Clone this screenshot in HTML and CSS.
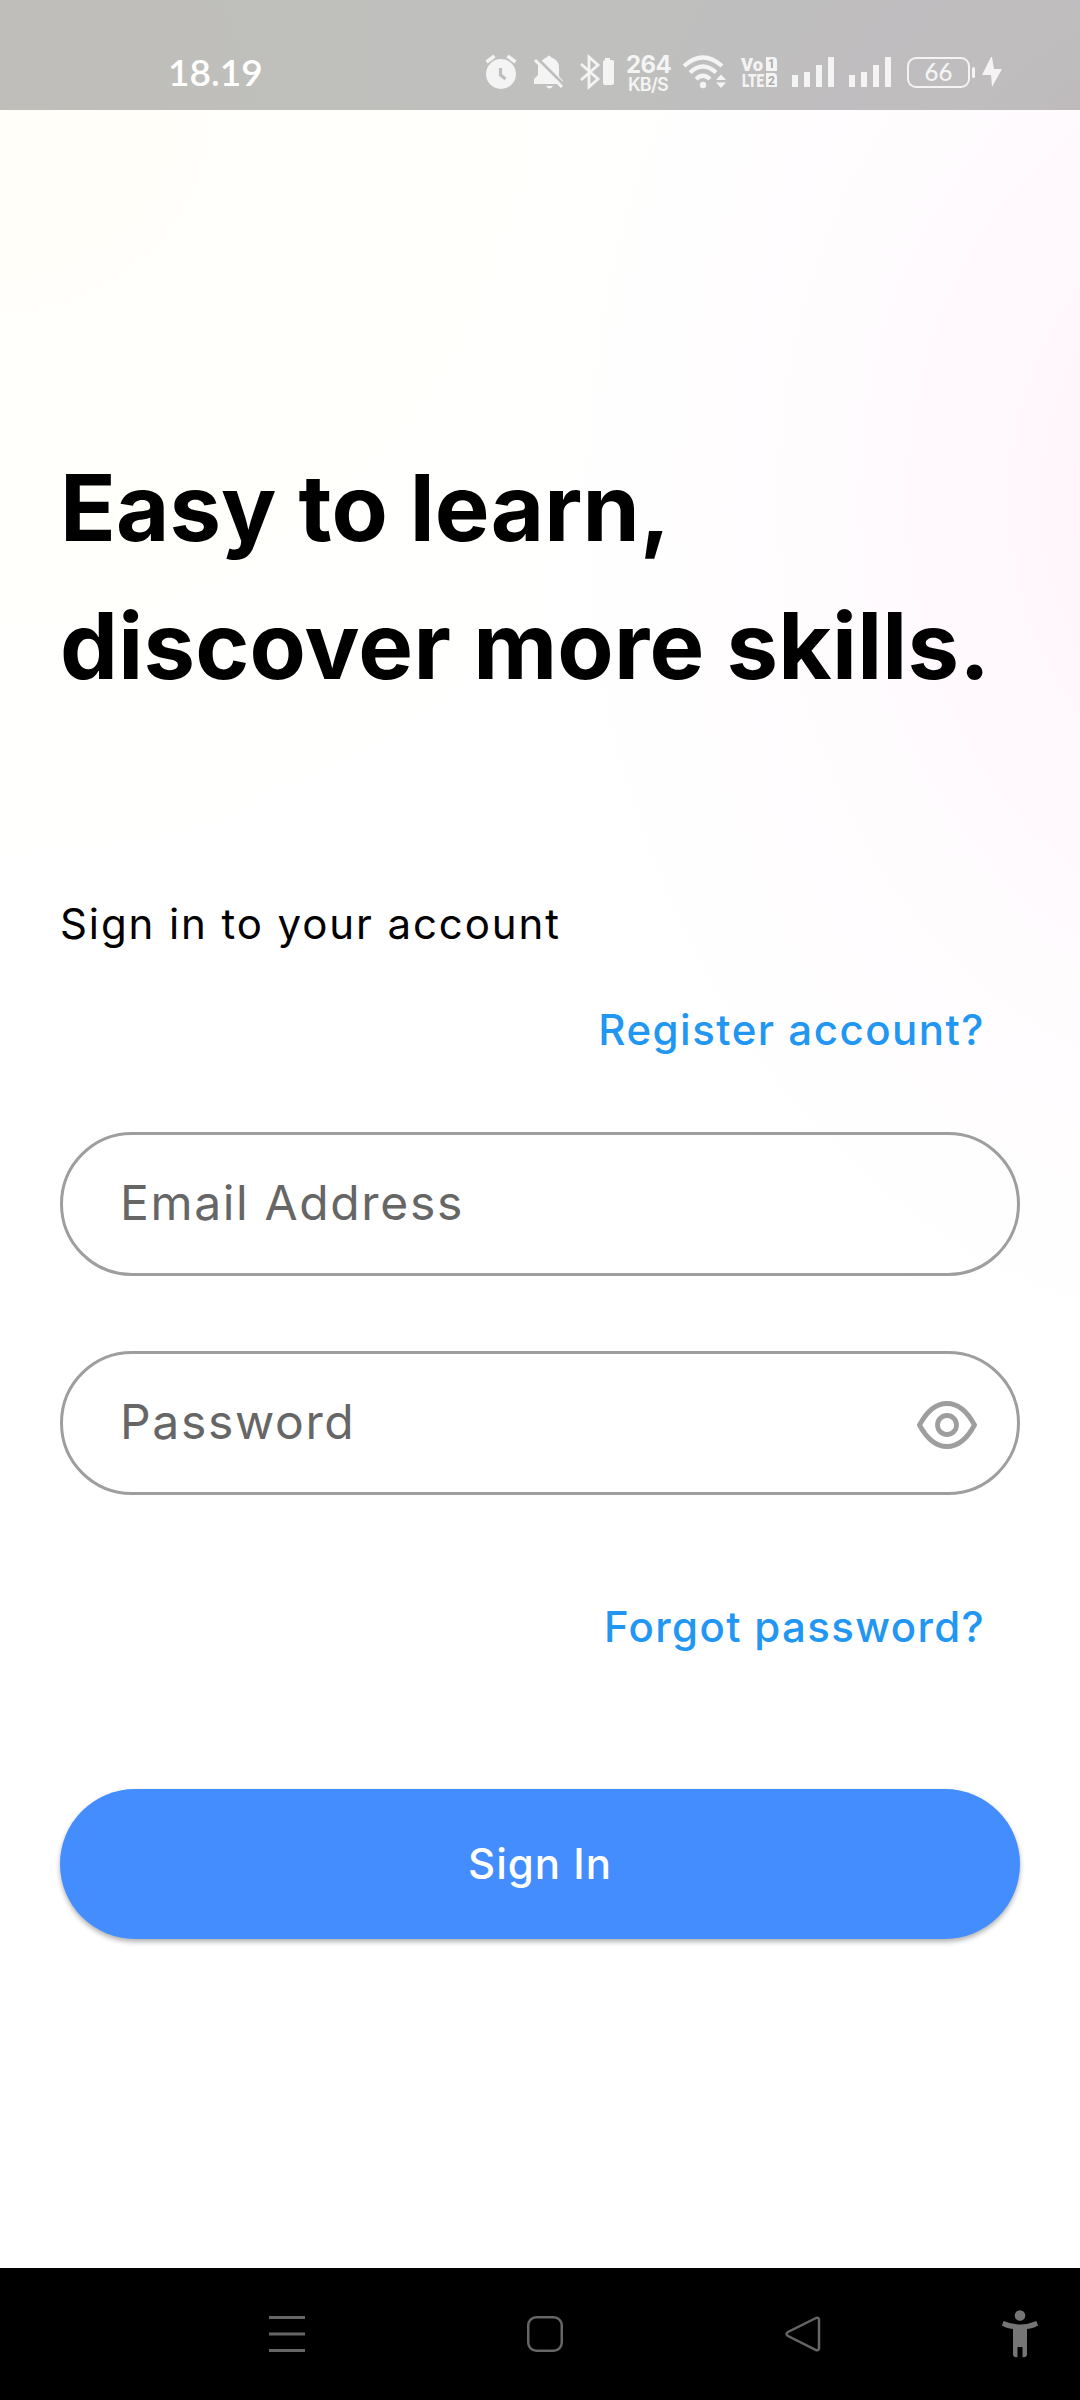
FILE: index.html
```html
<!DOCTYPE html>
<html lang="en">
<head>
<meta charset="utf-8">
<title>Sign In</title>
<link rel="stylesheet" href="styles.css">
</head>
<body>
<div class="screen">
  <header class="status">
    <span class="clock">18.19</span>
    <div class="tray">
      <svg class="alarm" width="32" height="36" viewBox="0 0 32 36"><circle cx="16" cy="20" r="15" fill="#f4f4f4"/><path d="M1.500 8 9.500 2M30.500 8 22.500 2" stroke="#f4f4f4" stroke-width="3.500"/><path d="M15.500 14v7l5 4" fill="none" stroke="#bebebd" stroke-width="3.200"/></svg>
      <svg class="bell" width="32" height="36" viewBox="0 0 32 36"><path d="M9 6.500Q12 3.500 14 3.200q2-3.200 4 0Q26 6 26 13v9l4 5v3H1v-5l4-4v-8Q5 9 9 6.500ZM13 32h7q-3.500 5-7 0Z" fill="#f4f4f4"/><path d="M4 4 32 32" stroke="#bebebd" stroke-width="3"/><path d="M2 6 29 33" stroke="#f4f4f4" stroke-width="3"/></svg>
      <svg class="bt" width="36" height="36" viewBox="0 0 36 36"><path d="m2 10 17 15-9 8V3l9 8L2 26" fill="none" stroke="#f4f4f4" stroke-width="2.800"/><path d="M26 4h5v2h2q2 0 2 2v21q0 2-2 2h-7q-2 0-2-2V8q0-2 2-2Z" fill="#f4f4f4"/></svg>
      <div class="speed"><b>264</b><span>KB/S</span></div>
      <svg class="wifi" width="46" height="36" viewBox="0 0 46 36"><g fill="none" stroke="#f4f4f4" stroke-width="4.200"><path d="M2 12q19-17 38 0M8 18.500q13-12 26 0M14 25q7-6.500 14 0"/></g><circle cx="21" cy="31" r="3.200" fill="#f4f4f4"/><path d="m34 26 5-5.500 5 5.500ZM34 28.500h10L39 34Z" fill="#f4f4f4"/></svg>
      <svg class="volte" width="38" height="32" viewBox="0 0 38 32"><g class="volte-text"><text x="0" y="14.500" textLength="22" lengthAdjust="spacingAndGlyphs">Vo</text><text x="1" y="30.500" textLength="22" lengthAdjust="spacingAndGlyphs">LTE</text></g><path d="M25 1h7q4 0 4 4v10H25zM25 17h7q4 0 4 4v10H25z" fill="#f4f4f4"/><text x="27" y="12.300" class="sim">1</text><text x="27" y="28.500" class="sim">2</text></svg>
      <svg class="bars" width="44" height="30" viewBox="0 0 44 30"><path d="M1 18h6v12H1zM13 15h6v15h-6zM25 8h6v22h-6zM37 0h6v30h-6z" fill="#f4f4f4"/></svg>
      <svg class="bars" width="44" height="30" viewBox="0 0 44 30"><path d="M1 18h6v12H1zM13 15h6v15h-6zM25 8h6v22h-6zM37 0h6v30h-6z" fill="#f4f4f4"/></svg>
      <span class="battery">66</span>
      <svg class="bolt" width="20" height="30" viewBox="0 0 20 30"><path d="M9 0 0 18h9l1 12 10-18h-8L10 0Z" fill="#f4f4f4"/></svg>
    </div>
  </header>
  <main class="login">
    <h1><span class="line-a">Easy to learn,</span><br><span class="line-b">discover more skills.</span></h1>
    <p class="subtitle">Sign in to your account</p>
    <a class="link register">Register account?</a>
    <div class="field"><span class="placeholder">Email Address</span></div>
    <div class="field field-pass"><span class="placeholder">Password</span>
      <svg class="eye" width="62" height="50" viewBox="0 0 62 50"><path d="M3.500 25C11 11 19.500 3.500 31 3.500S51 11 58.500 25C51 39 42.500 46.500 31 46.500S11 39 3.500 25Z" fill="none" stroke="#9e9e9e" stroke-width="4.800"/><circle cx="31" cy="25" r="9.500" fill="none" stroke="#9e9e9e" stroke-width="4.800"/></svg>
    </div>
    <a class="link forgot">Forgot password?</a>
    <button class="submit">Sign In</button>
  </main>
  <nav class="navbar">
    <svg width="36" height="36" viewBox="0 0 36 36"><path d="M0 1.500h36M0 18h36M0 34.500h36" stroke="#666" stroke-width="3"/></svg>
    <svg width="36" height="36" viewBox="0 0 36 36"><rect x="1.250" y="1.250" width="33.500" height="33.500" rx="8" fill="none" stroke="#666" stroke-width="2.500"/></svg>
    <svg width="36" height="36" viewBox="0 0 36 36"><path d="M31 2 3 16q-3 2 0 4l28 14q3 1 3-2V4q0-3-3-2Z" fill="none" stroke="#666" stroke-width="2.500"/></svg>
    <svg class="person" width="38" height="48" viewBox="0 0 38 48"><circle cx="19" cy="5.500" r="5.300" fill="#757575"/><path d="M2.500 11Q19 18 35.500 11l1.500 4.500Q33 18 26 19v26q-1 3-4.500 2V37h-5v10q-3.500 1-4.500-2V19Q5 18 1 15.500Z" fill="#757575"/></svg>
  </nav>
</div>
</body>
</html>
```
FILE: styles.css
```css
* { box-sizing: border-box; }
body { margin: 0; font-family: Inter, "Noto Sans", sans-serif; }
.screen {
  width: 1080px; height: 2400px; display: flex; flex-direction: column;
  background:
    radial-gradient(ellipse 720px 900px at 1250px 500px, #fff1f9 0%, #fff6fb 28%, rgba(255,251,254,.7) 60%, rgba(255,255,255,0) 100%),
    radial-gradient(ellipse 800px 800px at 0 100px, #fffef9 0%, #fffffc 55%, #fff 100%);
}
.status { height: 110px; display: flex; background: rgba(0,0,0,.25); color: #fff; }
.clock { width: 315px; margin-left: 168px; padding-top: 51px; font: 600 37px/41px Lato, sans-serif; }
.tray { display: flex; align-items: flex-start; flex: 1; color: #f4f4f4; }
.tray svg { flex: none; overflow: visible; }
.alarm { margin: 54px 0 0 2px; }
.bell { margin: 54px 0 0 16px; }
.bt { margin: 54px 0 0 14px; }
.speed { width: 46px; margin: 55px 0 0 11px; display: flex; flex-direction: column; font-size: 24px; line-height: 20px; letter-spacing: -.6px; white-space: nowrap; }
.speed span { padding-left: 2px; font-size: 18px; font-weight: 600; line-height: 19px; letter-spacing: -.8px; }
.wifi { margin: 54px 0 0 10px; }
.volte { margin: 56px 0 0 13px; }
.volte-text { font: 900 19px Roboto, sans-serif; fill: #f4f4f4; }
.sim { font: 700 12px Roboto, sans-serif; fill: #a8a8a8; }
.bars { margin: 57px 0 0 12px; }
.bars + .bars { margin-left: 13px; }
.battery { width: 63px; height: 31px; margin: 57px 0 0 15px; position: relative; border: 2.500px solid #f4f4f4; border-radius: 9px; font: 500 24px/26px Lato, sans-serif; text-align: center; flex: none; }
.battery::after { content: ""; position: absolute; right: -7px; top: 8px; width: 3px; height: 11px; border-radius: 2px; background: #f4f4f4; }
.bolt { margin: 57px 0 0 12px; }
.login { flex: 1; display: flex; flex-direction: column; padding: 329px 60px 0; }
h1 { margin: 0; font-size: 92px; line-height: 138px; font-weight: 700; color: #000; white-space: nowrap; }
.line-a { letter-spacing: .1px; }
.line-b { letter-spacing: .25px; }
.subtitle { margin: 179px 0 0; font-size: 42px; line-height: 60px; letter-spacing: 1.900px; color: #000; }
.link { margin-right: 35px; align-self: flex-end; font-size: 42px; line-height: 60px; font-weight: 500; letter-spacing: 1.350px; color: #2196f3; white-space: nowrap; }
.register { margin-top: 46px; letter-spacing: 1.500px; }
.field { height: 144px; margin-top: 72px; padding: 0 39px 0 57px; display: flex; align-items: center; justify-content: space-between; border: 3px solid #9e9e9e; border-radius: 72px; font-size: 48px; letter-spacing: 1.650px; color: #666; }
.field-pass { margin-top: 75px; }
.placeholder { padding-bottom: 4px; }
.eye { margin-top: 3px; }
.forgot { margin-top: 102px; }
.submit { height: 150px; margin-top: 132px; padding: 0; border: 0; border-radius: 75px; background: #438dff; color: #fff; font: 500 42px/60px Inter, sans-serif; letter-spacing: 1px; box-shadow: 0 3px 5px rgba(0,0,0,.3); }
.navbar { height: 132px; padding: 0 42px 0 269px; display: flex; align-items: center; background: #000; }
.navbar svg { flex: none; margin-right: 222px; }
.navbar svg:nth-child(3) { margin-right: 180px; }
.navbar .person { margin-right: 0; }
```
